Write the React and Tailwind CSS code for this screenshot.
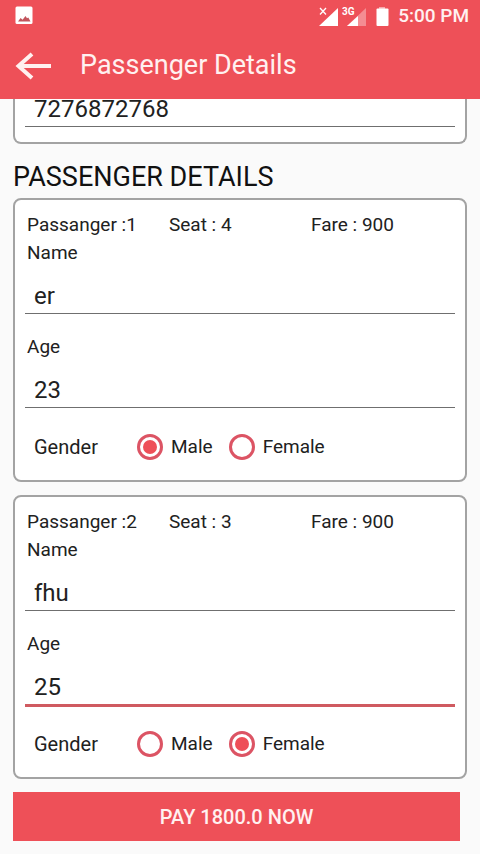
// src/App.jsx
import React, { useState } from "react";
import clsx from "clsx";

const initialPassengers = [
  { id: 1, seat: 4, fare: 900, name: "er", age: "23", gender: "Male" },
  { id: 2, seat: 3, fare: 900, name: "fhu", age: "25", gender: "Female" },
];

const GENDERS = ["Male", "Female"];

const StatusBar = () => (
  <div className="flex h-8 items-center justify-between pl-[14px] pr-[11px]">
    <svg width="20" height="20" viewBox="0 0 20 20" aria-hidden="true">
      <rect x="1.500" y="0.500" width="17" height="17.500" rx="1.500" fill="#fff" />
      <path
        d="M4 15.500l2.600-3.500 2 1.800L11.500 10l1.500 2.300 1.300-.8 2.200 4z"
        fill="#c2545c"
      />
    </svg>

    <div className="flex items-center">
      <svg width="72" height="22" viewBox="0 0 72 22" aria-hidden="true">
        <path d="M2 3l6 6.500M8 3l-6 6.500" stroke="#fff" strokeWidth="1.300" />
        <path d="M20 3v18H1z" fill="#fff" />
        <path d="M48 3v18H29z" fill="#fff" opacity=".35" />
        <path d="M40 11v10H29z" fill="#fff" />
        <text
          x="24"
          y="10"
          fill="#fff"
          className="font-[Roboto,sans-serif] text-[10px] font-bold"
        >
          3G
        </text>
        <path d="M61 2h6v2h-6z" fill="#fff" opacity=".5" />
        <rect x="58.500" y="3.500" width="12" height="17.500" rx="1" fill="#fff" />
      </svg>
      <span className="ml-2 text-[19px] font-medium">5:00 PM</span>
    </div>
  </div>
);

const Header = () => (
  <header className="relative z-10 bg-[#ee5058] text-[#fff1f0]">
    <StatusBar />
    <div className="flex h-[67px] items-center px-[14px]">
      <button type="button" aria-label="Back" className="w-[66px]">
        <svg width="38" height="30" viewBox="0 0 38 30" fill="none" aria-hidden="true">
          <path
            d="M18 3L4.500 15 18 27M4 15h33"
            stroke="currentColor"
            strokeWidth="4"
          />
        </svg>
      </button>
      <h1 className="text-[27px]">Passenger Details</h1>
    </div>
  </header>
);

const TextInput = ({ active, ...props }) => (
  <div className="h-[49px]">
    <input
      {...props}
      className={clsx(
        "w-full bg-transparent px-[9px] pt-3 text-2xl outline-none",
        active
          ? "h-[49px] border-b-3 border-[#cf5a60]"
          : "h-[47px] border-b border-[#6f6f6f]",
      )}
    />
  </div>
);

const Field = ({ id, label, ...props }) => (
  <div>
    <label htmlFor={id} className="block px-[2px] text-[19px] leading-7">
      {label}
    </label>
    <TextInput id={id} {...props} />
  </div>
);

const PassengerCard = ({ passenger, activeField, onFocusField, onChange }) => {
  const { id, seat, fare, name, age, gender } = passenger;

  return (
    <section className="rounded-lg border-2 border-[#a3a3a3] bg-white px-[10px] pb-[19px] pt-[11px]">
      <div className="grid grid-cols-3 px-[2px] text-[19px] leading-7">
        <span>Passanger :{id}</span>
        <span>Seat : {seat}</span>
        <span>Fare : {fare}</span>
      </div>

      <div className="flex flex-col gap-[17px]">
        <Field
          id={`name-${id}`}
          label="Name"
          type="text"
          value={name}
          active={activeField === `name-${id}`}
          onFocus={() => onFocusField(`name-${id}`)}
          onChange={(e) => onChange(id, { name: e.target.value })}
        />
        <Field
          id={`age-${id}`}
          label="Age"
          type="text"
          inputMode="numeric"
          value={age}
          active={activeField === `age-${id}`}
          onFocus={() => onFocusField(`age-${id}`)}
          onChange={(e) => onChange(id, { age: e.target.value })}
        />
      </div>

      <div
        role="radiogroup"
        aria-labelledby={`gender-${id}`}
        className="mt-[23px] flex items-center px-[9px] leading-7"
      >
        <span id={`gender-${id}`} className="w-[103px] text-xl leading-7">
          Gender
        </span>
        <div className="flex gap-4">
          {GENDERS.map((option) => (
            <label key={option} className="flex items-center gap-2 text-[19px]">
              <input
                type="radio"
                name={`gender-${id}`}
                value={option}
                checked={gender === option}
                onChange={() => onChange(id, { gender: option })}
                className="size-[26px] appearance-none rounded-full border-[3px] border-[#dc5464] bg-white bg-clip-content p-[3px] checked:bg-[#ee4f58]"
              />
              {option}
            </label>
          ))}
        </div>
      </div>
    </section>
  );
};

const App = () => {
  const [mobile, setMobile] = useState("7276872768");
  const [passengers, setPassengers] = useState(initialPassengers);
  const [activeField, setActiveField] = useState("age-2");

  const total = passengers.reduce((sum, item) => sum + item.fare, 0);

  const handleChange = (id, changes) => {
    setPassengers((prev) =>
      prev.map((item) => (item.id === id ? { ...item, ...changes } : item)),
    );
  };

  return (
    <div className="min-h-screen bg-[#fafafa] font-[Roboto,sans-serif] text-[#212121]">
      <Header />

      <main className="px-[13px] pb-[13px]">
        {/* contact card, scrolled partly under the header */}
        <section className="-mt-[19px] rounded-b-lg border-2 border-t-0 border-[#a3a3a3] bg-white px-[10px] pb-[13px]">
          <TextInput
            type="tel"
            aria-label="Mobile number"
            value={mobile}
            active={activeField === "mobile"}
            onFocus={() => setActiveField("mobile")}
            onChange={(e) => setMobile(e.target.value)}
          />
        </section>

        <h2 className="mb-[3px] mt-[15px] text-[27px] leading-9 text-[#111111]">
          PASSENGER DETAILS
        </h2>

        <div className="flex flex-col gap-[13px]">
          {passengers.map((passenger) => (
            <PassengerCard
              key={passenger.id}
              passenger={passenger}
              activeField={activeField}
              onFocusField={setActiveField}
              onChange={handleChange}
            />
          ))}
        </div>

        <div className="pr-[7px] pt-[13px]">
          <button
            type="button"
            className="h-[49px] w-full bg-[#ee5058] text-xl font-medium text-[#fff1f0]"
          >
            PAY {total.toFixed(1)} NOW
          </button>
        </div>
      </main>
    </div>
  );
};

export default App;
